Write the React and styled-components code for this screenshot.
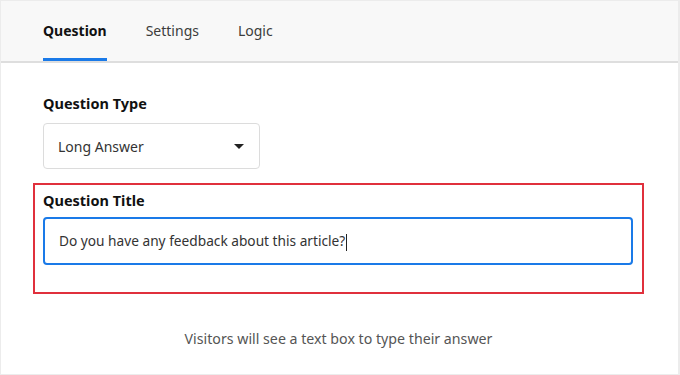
import React, { useState } from "react";
import styled, { createGlobalStyle } from "styled-components";

const GlobalStyle = createGlobalStyle`
  html, body {
    margin: 0;
    padding: 0;
    background: #ffffff;
  }
  * {
    box-sizing: border-box;
  }
`;

const Panel = styled.div`
  width: 680px;
  height: 375px;
  border: 1px solid #ececec;
  border-right-width: 2px;
  background: #fff;
  font-family: "Noto Sans", "Open Sans", sans-serif;
  color: #1e1e1e;
  overflow: hidden;
`;

const TabBar = styled.div`
  display: flex;
  gap: 39px;
  height: 62px;
  padding-left: 42px;
  background: #f8f8f8;
  border-bottom: 2px solid #dedede;
`;

const Tab = styled.button`
  display: flex;
  align-items: center;
  height: 60px;
  padding: 1px 0 0;
  border: none;
  border-bottom: 3px solid ${(p) => (p.$active ? "#1a7ae8" : "transparent")};
  background: none;
  font-family: inherit;
  font-size: 14px;
  font-weight: ${(p) => (p.$active ? 700 : 400)};
  color: ${(p) => (p.$active ? "#111" : "#3c3c3c")};
  cursor: pointer;
`;

const Body = styled.div`
  padding: 30px 34px 0 32px;
`;

const Field = styled.div`
  display: flex;
  flex-direction: column;
  padding: 0 10px;
`;

const Label = styled.label`
  font-size: 14.5px;
  font-weight: 700;
  line-height: 20px;
  color: #111;
`;

const Select = styled.div`
  display: flex;
  align-items: center;
  justify-content: space-between;
  width: 217px;
  height: 46px;
  margin-top: 10px;
  padding: 0 15px 0 14px;
  border: 1px solid #dcdcdc;
  border-radius: 4px;
  font-size: 14px;
  color: #333;
`;

const Caret = styled.span`
  width: 0;
  height: 0;
  border-left: 5px solid transparent;
  border-right: 5px solid transparent;
  border-top: 5px solid #222;
`;

const Highlight = styled.div`
  display: flex;
  flex-direction: column;
  gap: 7px;
  margin-top: 14px;
  padding: 5px 9px 27px 8px;
  border: 2px solid #e0303c;
`;

const Input = styled.div`
  display: flex;
  align-items: center;
  height: 48px;
  padding: 0 14px;
  border: 2px solid #1a7ae8;
  border-radius: 4px;
  font-size: 13.7px;
  color: #333;
`;

const Cursor = styled.span`
  display: inline-block;
  width: 1px;
  height: 17px;
  margin-left: 1px;
  background: #222;
  vertical-align: middle;
`;

const Hint = styled.p`
  margin: 35px 0 0;
  text-align: center;
  font-size: 14.2px;
  line-height: 20px;
  color: #555;
`;

const tabs = ["Question", "Settings", "Logic"];

export default function App() {
  const [active, setActive] = useState("Question");

  return (
    <>
      <GlobalStyle />
      <Panel>
        <TabBar>
          {tabs.map((t) => (
            <Tab key={t} $active={t === active} onClick={() => setActive(t)}>
              {t}
            </Tab>
          ))}
        </TabBar>
        <Body>
          <Field>
            <Label>Question Type</Label>
            <Select>
              <span>Long Answer</span>
              <Caret />
            </Select>
          </Field>
          <Highlight>
            <Label>Question Title</Label>
            <Input>
              <span>
                Do you have any feedback about this article?
                <Cursor />
              </span>
            </Input>
          </Highlight>
          <Hint>Visitors will see a text box to type their answer</Hint>
        </Body>
      </Panel>
    </>
  );
}
